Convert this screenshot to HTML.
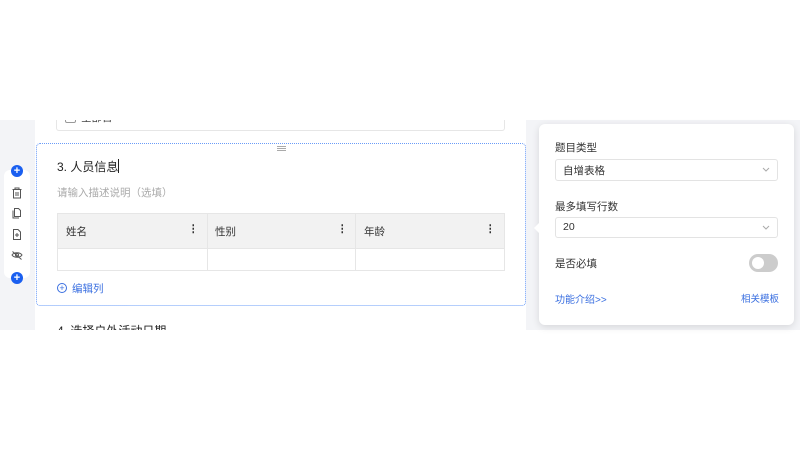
<!DOCTYPE html>
<html><head><meta charset="utf-8"><style>
*{margin:0;padding:0;box-sizing:border-box}
body{width:800px;height:450px;background:#fff;position:relative;overflow:hidden;font-family:"Liberation Sans","Noto Sans CJK SC",sans-serif;color:#333}
.abs{position:absolute}
.grey{background:#f3f4f7}
.t{font-size:10.5px;position:absolute;white-space:nowrap}
</style></head><body>
<div class="abs grey" style="left:0;top:120px;width:800px;height:210px"></div>
<div class="abs" style="left:35px;top:120px;width:491px;height:210px;background:#fff"></div>
<div class="abs" style="left:56px;top:100px;width:449px;height:31px;border:1px solid #e6e6e6;border-top:none;border-radius:0 0 3px 3px;background:#fff;overflow:hidden">
 <div class="abs" style="left:8px;top:12px;width:11px;height:11px;border:1px solid #999;border-radius:2px"></div>
 <div class="t" style="left:24px;top:10px;color:#444">全部日</div>
</div>
<div class="abs" style="left:56px;top:100px;width:449px;height:20px;background:#fff"></div>
<div class="abs" style="left:36px;top:143px;width:490px;height:163px;border:1px dotted #6a9cf8;border-radius:4px;background:#fff"></div>
<div class="abs" style="left:277px;top:146px;width:9px;height:5px;border-top:1px solid #aaa;border-bottom:1px solid #aaa"><div style="margin-top:1px;border-top:1px solid #aaa"></div></div>
<div class="t" style="left:57px;top:158px;font-size:12px;color:#222">3. 人员信息<span style="display:inline-block;width:1px;height:14px;background:#222;vertical-align:-2px"></span></div>
<div class="t" style="left:57px;top:185px;color:#aaa">请输入描述说明（选填）</div>
<div class="abs" style="left:57px;top:213px;width:448px;height:58px;border:1px solid #e6e6e6">
 <div class="abs" style="left:0;top:0;width:446px;height:35px;background:#f2f2f2;border-bottom:1px solid #e6e6e6"></div>
 <div class="abs" style="left:149px;top:0;width:1px;height:56px;background:#e6e6e6"></div>
 <div class="abs" style="left:297px;top:0;width:1px;height:56px;background:#e6e6e6"></div>
 <div class="t" style="left:8px;top:10px">姓名</div><div class="t" style="left:130px;top:9px;font-weight:bold">⋮</div>
 <div class="t" style="left:157px;top:10px">性别</div><div class="t" style="left:279px;top:9px;font-weight:bold">⋮</div>
 <div class="t" style="left:306px;top:10px">年龄</div><div class="t" style="left:427px;top:9px;font-weight:bold">⋮</div>
</div>
<div class="abs" style="left:57px;top:283px;width:10px;height:10px;border:1px solid #3a6fe0;border-radius:50%;font-size:9px;line-height:8px;text-align:center;color:#3a6fe0">+</div>
<div class="t" style="left:72px;top:281px;color:#3a6fe0">编辑列</div>
<div class="t" style="left:57px;top:322px;font-size:12px;color:#222">4. 选择户外活动日期</div>
<div class="abs" style="left:0;top:330px;width:800px;height:120px;background:#fff"></div>
<div class="abs" style="left:4px;top:170px;width:26px;height:108px;background:#fff;border-radius:6px"></div>
<div class="abs" style="left:11px;top:165px;width:12px;height:12px;border-radius:50%;background:#1a5ff0;color:#fff;font-size:11px;line-height:12px;text-align:center;font-weight:bold">+</div>
<div class="abs" style="left:11px;top:272px;width:12px;height:12px;border-radius:50%;background:#1a5ff0;color:#fff;font-size:11px;line-height:12px;text-align:center;font-weight:bold">+</div>
<svg class="abs" style="left:10px;top:187px" width="14" height="80" fill="none" stroke="#555" stroke-width="1">
 <path d="M2.5 2.5h9M5 2.5V1h4v1.5M3.5 2.5v8.5h7V2.5M6 5v4M8 5v4"/>
 <path d="M4.5 22.5v8h6v-6l-2-2zM3 24.5v7.5h6" transform="translate(0,-1)"/>
 <path d="M3.5 42.5v10h7v-7.5l-2.5-2.5zM5 48h4M7 46v4"/>
 <path d="M2 68c2-3 8-3 10 0c-2 3-8 3-10 0zM2.5 64.5l9 8"/><circle cx="7" cy="68" r="1.5"/>
</svg>
<div class="abs" style="left:539px;top:124px;width:255px;height:201px;background:#fff;border-radius:6px;box-shadow:0 2px 8px rgba(0,0,0,.12)"></div>
<div class="abs" style="left:534px;top:222px;width:0;height:0;border-top:6px solid transparent;border-bottom:6px solid transparent;border-right:6px solid #fff"></div>
<div class="t" style="left:555px;top:140px">题目类型</div>
<div class="abs" style="left:555px;top:159px;width:223px;height:22px;border:1px solid #e3e3e3;border-radius:3px"></div>
<div class="t" style="left:563px;top:163px">自增表格</div>
<svg class="abs" style="left:762px;top:167px" width="8" height="5" fill="none" stroke="#aaa"><path d="M1 1l3 3 3-3"/></svg>
<div class="t" style="left:555px;top:199px">最多填写行数</div>
<div class="abs" style="left:555px;top:217px;width:223px;height:21px;border:1px solid #e3e3e3;border-radius:3px"></div>
<div class="t" style="left:563px;top:221px">20</div>
<svg class="abs" style="left:762px;top:225px" width="8" height="5" fill="none" stroke="#aaa"><path d="M1 1l3 3 3-3"/></svg>
<div class="t" style="left:555px;top:256px">是否必填</div>
<div class="abs" style="left:749px;top:254px;width:29px;height:18px;border-radius:9px;background:#ccc"><div style="position:absolute;left:3px;top:3px;width:12px;height:12px;border-radius:50%;background:#fff"></div></div>
<div class="t" style="left:555px;top:291px;color:#3a6fe0;font-size:10px">功能介绍&gt;&gt;</div>
<div class="t" style="left:741px;top:291px;color:#3a6fe0;font-size:9.5px">相关模板</div>
</body></html>
